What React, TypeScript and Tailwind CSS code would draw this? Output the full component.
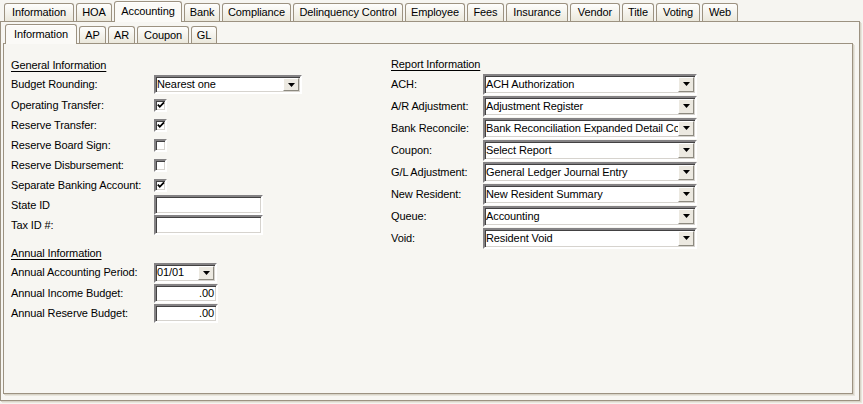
import React from 'react';

const outerTabs = [
  { label: 'Information', w: 'w-[70px]' },
  { label: 'HOA', w: 'w-[36px]' },
  { label: 'Accounting', w: 'w-[68px]', active: true },
  { label: 'Bank', w: 'w-[36px]' },
  { label: 'Compliance', w: 'w-[69px]' },
  { label: 'Delinquency Control', w: 'w-[110px]' },
  { label: 'Employee', w: 'w-[60px]' },
  { label: 'Fees', w: 'w-[37px]' },
  { label: 'Insurance', w: 'w-[62px]' },
  { label: 'Vendor', w: 'w-[50px]' },
  { label: 'Title', w: 'w-[32px]' },
  { label: 'Voting', w: 'w-[44px]' },
  { label: 'Web', w: 'w-[36px]' },
];

const innerTabs = [
  { label: 'Information', w: 'w-[72px]', active: true },
  { label: 'AP', w: 'w-[27px]' },
  { label: 'AR', w: 'w-[27px]' },
  { label: 'Coupon', w: 'w-[52px]' },
  { label: 'GL', w: 'w-[26px]' },
];

const reports = [
  { label: 'ACH:', value: 'ACH Authorization' },
  { label: 'A/R Adjustment:', value: 'Adjustment Register' },
  { label: 'Bank Reconcile:', value: 'Bank Reconciliation Expanded Detail Cor' },
  { label: 'Coupon:', value: 'Select Report' },
  { label: 'G/L Adjustment:', value: 'General Ledger Journal Entry' },
  { label: 'New Resident:', value: 'New Resident Summary' },
  { label: 'Queue:', value: 'Accounting' },
  { label: 'Void:', value: 'Resident Void' },
];

const sunken =
  'border-2 border-t-[#848284] border-l-[#848284] border-b-white border-r-white shadow-[inset_1px_1px_0_#424142,inset_-1px_-1px_0_#d6d3ce]';

function Tab({ label, w, active, small }: { label: string; w: string; active?: boolean; small?: boolean }) {
  if (active) {
    return (
      <div
        className={`${w} ${small ? 'h-[20px]' : 'h-[21px]'} -mb-[1px] relative z-10 flex items-center justify-center rounded-t-[3px] border border-b-0 border-[#9c9281] bg-[#fbfaf7] shadow-[inset_0_1px_0_#fff]`}
      >
        <span className="-mt-[1px]">{label}</span>
      </div>
    );
  }
  return (
    <div
      className={`${w} ${small ? 'h-[17px]' : 'h-[18px]'} flex items-center justify-center rounded-t-[3px] border border-b-0 border-[#9c9281] bg-gradient-to-b from-[#fefefd] to-[#ebe8dc]`}
    >
      {label}
    </div>
  );
}

function Arrow() {
  return (
    <span className="w-[16px] my-[1px] mr-[1px] shrink-0 flex items-center justify-center bg-[#ece9e1] border border-t-white border-l-white border-r-[#8d8a80] border-b-[#8d8a80]">
      <svg width="7" height="4" viewBox="0 0 7 4">
        <polygon points="0,0 7,0 3.5,4" fill="#000" />
      </svg>
    </span>
  );
}

function Combo({ value, w, h }: { value: string; w: string; h: string }) {
  return (
    <div className={`${w} ${h} flex bg-white ${sunken}`}>
      <span className="flex-1 min-w-0 pl-[1px] flex items-center overflow-hidden whitespace-nowrap">{value}</span>
      <Arrow />
    </div>
  );
}

function TextBox({ w, h, value = '', right }: { w: string; h: string; value?: string; right?: boolean }) {
  return (
    <div className={`${w} ${h} flex items-center bg-white ${sunken} ${right ? 'justify-end pr-[2px]' : 'pl-[2px]'}`}>
      {value}
    </div>
  );
}

function Check({ checked }: { checked?: boolean }) {
  return (
    <div className={`w-[13px] h-[13px] flex items-center justify-center bg-white ${sunken}`}>
      {checked && (
        <svg width="8" height="8" viewBox="0 0 8 8">
          <polyline points="0.8,3.6 2.8,5.8 7,1.4" fill="none" stroke="#000" strokeWidth="1.8" />
        </svg>
      )}
    </div>
  );
}

function Row({ label, h = 'h-[20px]', children }: { label: string; h?: string; children?: React.ReactNode }) {
  return (
    <div className={`${h} flex items-center`}>
      <span className="w-[143px] shrink-0">{label}</span>
      {children}
    </div>
  );
}

function Heading({ h = 'h-[18px]', children }: { h?: string; children: React.ReactNode }) {
  return <div className={`${h} flex items-center underline underline-offset-[2px]`}>{children}</div>;
}

export default function App() {
  return (
    <div className="w-[863px] h-[404px] bg-[#f6f5f1] text-black text-[11px] leading-none tracking-[-0.1px] font-['Liberation_Sans',Arial,sans-serif] overflow-hidden">
      <div className="h-[21px] flex items-end gap-[2px] pl-[4px]">
        {outerTabs.map((t) => (
          <Tab key={t.label} {...t} />
        ))}
      </div>

      <div className="w-[860px] h-[380px] flex flex-col pl-[2px] border border-[#9c9281] bg-[#f7f6f2] shadow-[1px_1px_0_#d8d4c8,2px_2px_0_#e8e5dc]">
        <div className="h-[21px] flex items-end gap-[2px] pl-[2px]">
          {innerTabs.map((t) => (
            <Tab key={t.label} {...t} small />
          ))}
        </div>

        <div className="w-[850px] h-[351px] flex pt-[12px] pl-[7px] border border-[#9c9281] bg-[#f7f6f2] shadow-[1px_1px_0_#d8d4c8,2px_2px_0_#e8e5dc]">
          <div className="w-[380px] flex flex-col">
            <Heading>General Information</Heading>
            <Row label="Budget Rounding:" h="h-[21px]">
              <Combo value="Nearest one" w="w-[148px]" h="h-[19px]" />
            </Row>
            <Row label="Operating Transfer:">
              <Check checked />
            </Row>
            <Row label="Reserve Transfer:">
              <Check checked />
            </Row>
            <Row label="Reserve Board Sign:">
              <Check />
            </Row>
            <Row label="Reserve Disbursement:">
              <Check />
            </Row>
            <Row label="Separate Banking Account:">
              <Check checked />
            </Row>
            <Row label="State ID">
              <TextBox w="w-[109px]" h="h-[20px]" />
            </Row>
            <Row label="Tax ID #:">
              <TextBox w="w-[109px]" h="h-[20px]" />
            </Row>

            <div className="mt-[9px]">
              <Heading>Annual Information</Heading>
            </div>
            <Row label="Annual Accounting Period:" h="h-[21px]">
              <Combo value="01/01" w="w-[63px]" h="h-[20px]" />
            </Row>
            <Row label="Annual Income Budget:">
              <TextBox w="w-[64px]" h="h-[19px]" value=".00" right />
            </Row>
            <Row label="Annual Reserve Budget:" h="h-[21px]">
              <TextBox w="w-[64px]" h="h-[19px]" value=".00" right />
            </Row>
          </div>

          <div className="flex flex-col">
            <Heading h="h-[17px]">Report Information</Heading>
            {reports.map((r) => (
              <div key={r.label} className="h-[22px] flex items-center">
                <span className="w-[92px] shrink-0">{r.label}</span>
                <Combo value={r.value} w="w-[214px]" h="h-[21px]" />
              </div>
            ))}
          </div>
        </div>
      </div>
    </div>
  );
}
